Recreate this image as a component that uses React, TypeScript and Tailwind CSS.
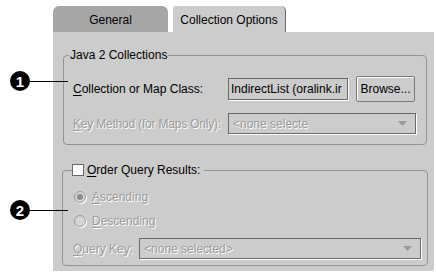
import React from 'react';

function Mn({ children }: { children: React.ReactNode }) {
  return <span className="underline underline-offset-[2px] decoration-1">{children}</span>;
}

const dim = 'text-[#9c9c9c] [text-shadow:1px_1px_0_#ffffff]';

function Combo({ width, text }: { width: string; text: string }) {
  return (
    <div
      className={`${width} h-[21px] shrink-0 border border-[#6a6a6a] shadow-[1px_1px_0_#ffffff] flex items-center pl-[4px] pr-[8px] justify-between`}
    >
      <span className={`${dim} whitespace-nowrap overflow-hidden`}>{text}</span>
      <svg width="9" height="5" viewBox="0 0 9 5">
        <path d="M0 0 H9 L4.5 5 Z" fill="#9a9a9a" />
      </svg>
    </div>
  );
}

function Radio({ checked, children }: { checked?: boolean; children: React.ReactNode }) {
  return (
    <div className="flex items-center h-[18px] ml-[11px] gap-[6px]">
      <div className="w-[12px] h-[12px] rounded-full border border-[#9a9a9a] bg-[#d4d4d4] flex items-center justify-center shadow-[1px_1px_0_#ffffff]">
        {checked && <div className="w-[6px] h-[6px] rounded-full bg-[#8c8c8c]" />}
      </div>
      <span className={dim}>{children}</span>
    </div>
  );
}

function Callout({ n, top }: { n: string; top: string }) {
  return (
    <div className={`absolute left-[10px] ${top} flex items-center`}>
      <div className="w-[20px] h-[20px] rounded-full bg-black text-white font-bold text-[15px] leading-none flex items-center justify-center">
        {n}
      </div>
      <div className="w-[38px] h-px bg-black" />
    </div>
  );
}

export default function App() {
  return (
    <div className="relative w-[436px] h-[274px] bg-white overflow-hidden text-[12px] leading-[14px] text-black font-['Liberation_Sans',Arial,sans-serif]">
      <div className="ml-[53px] pt-[6px] w-[381px]">
        <div className="flex h-[26px] gap-[5px]">
          <div className="w-[115px] rounded-t-[6px] bg-[#a6a6a6] flex items-center justify-center pt-[1px]">
            General
          </div>
          <div className="w-[113px] rounded-tl-[3px] rounded-tr-[5px] bg-[#cccccc] border-r border-[#6a6a6a] flex items-center justify-center pt-[1px]">
            Collection Options
          </div>
        </div>
        <div className="h-[239px] bg-[#cccccc] pt-[16px] rounded-br-[3px]">
          <fieldset className="ml-[10px] w-[364px] border border-[#939393] rounded-[4px] pb-[10px]">
            <legend className="ml-[5px] px-[1px]">Java 2 Collections</legend>
            <div className="mt-[14px] flex items-center h-[26px] pl-[9px]">
              <span className="w-[155px] shrink-0 whitespace-nowrap">
                <Mn>C</Mn>ollection or Map Class:
              </span>
              <div className="w-[120px] h-[22px] shrink-0 border border-[#6a6a6a] shadow-[1px_1px_0_#ffffff] pl-[2px] overflow-hidden whitespace-nowrap leading-[20px]">
                IndirectList (oralink.ir
              </div>
              <button className="ml-[8px] w-[59px] h-[26px] shrink-0 border border-[#7a7a7a] rounded-[2px] shadow-[inset_1px_1px_0_#ffffff] text-center">
                Browse...
              </button>
            </div>
            <div className="mt-[11px] flex items-center pl-[9px]">
              <span className={`w-[155px] shrink-0 whitespace-nowrap tracking-[-0.2px] ${dim}`}>
                <Mn>K</Mn>ey Method (for Maps Only):
              </span>
              <Combo width="w-[188px]" text="<none selecte" />
            </div>
          </fieldset>

          <fieldset className="mt-[18px] ml-[9px] w-[366px] border border-[#939393] rounded-[4px] pb-[6px]">
            <legend className="ml-[9px] pr-[4px] flex items-center gap-[3px]">
              <span className="w-[12px] h-[12px] border border-[#6a6a6a] bg-white inline-block" />
              <span>
                <Mn>O</Mn>rder Query Results:
              </span>
            </legend>
            <div className="mt-[11px]">
              <Radio checked>
                <Mn>A</Mn>scending
              </Radio>
            </div>
            <div className="mt-[6px]">
              <Radio>
                <Mn>D</Mn>escending
              </Radio>
            </div>
            <div className="mt-[8px] flex items-center ml-[10px] gap-[6px]">
              <span className={dim}>
                <Mn>Q</Mn>uery Key:
              </span>
              <Combo width="w-[282px]" text="<none selected>" />
            </div>
          </fieldset>
        </div>
      </div>

      <Callout n="1" top="top-[71px]" />
      <Callout n="2" top="top-[200px]" />
    </div>
  );
}
